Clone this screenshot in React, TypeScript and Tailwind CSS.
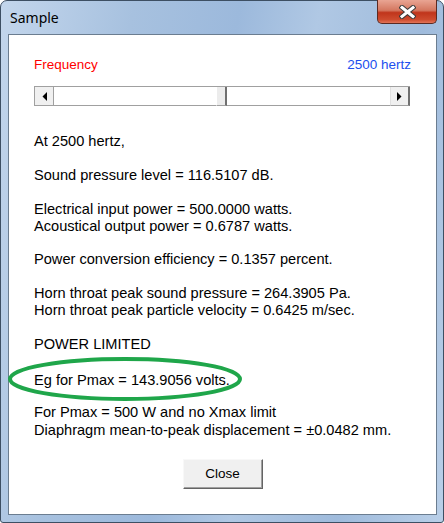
import React from "react";

const Arrow = ({ dir }: { dir: "l" | "r" }) => (
  <svg width="5" height="9" viewBox="0 0 5 9">
    {dir === "l" ? <polygon points="5,0 5,9 0.5,4.5" fill="#000" /> : <polygon points="0,0 0,9 4.5,4.5" fill="#000" />}
  </svg>
);

export default function App() {
  const body = { fontFamily: '"Liberation Sans", Arial, sans-serif' };
  return (
    <div className="w-[444px] h-[523px] relative overflow-hidden">
      <div className="w-[444px] h-[523px] rounded-t-[7px] rounded-b-[3px] border border-[#3d4f63] bg-[linear-gradient(100deg,#c3d6ec_0%,#a7c1df_25%,#9cb9dc_45%,#b0c8e4_60%,#9fbbdc_80%,#b9cfe8_100%)] flex flex-col">
        <div className="h-[33px] shrink-0 flex items-start pl-[9px] pt-[7px]">
          <span className="text-[14px] text-black leading-[20px]" style={{ fontFamily: '"Noto Sans", sans-serif' }}>Sample</span>
        </div>
        <div className="mx-[7px] mr-[6px] h-[481px] border border-[#6b7d90] bg-white flex flex-col px-[25px] pt-[21px] text-[14.6px] text-black" style={body}>
          <div className="flex justify-between leading-[17px] text-[13.5px]">
            <span className="text-[#ff0000]">Frequency</span>
            <span className="text-[#2050ee]">2500 hertz</span>
          </div>
          <div className="mt-[13px] h-[20px] w-[376px] flex border-t border-t-[#a0a0a0] bg-white">
            <div className="w-[20px] h-full bg-[#f0f0f0] border-r border-b border-r-[#a0a0a0] border-b-[#a0a0a0] border-l border-l-[#a0a0a0] flex items-center justify-center">
              <Arrow dir="l" />
            </div>
            <div className="w-[162px] h-full bg-white border-b border-b-[#a0a0a0]" />
            <div className="w-[11px] h-full bg-[#ececec] border-l border-l-[#ffffff] border-r-2 border-r-[#707070] border-b border-b-[#a0a0a0]" />
            <div className="flex-1 h-full bg-white border-b border-b-[#a0a0a0]" />
            <div className="w-[20px] h-full bg-[#f0f0f0] border-r-2 border-b border-r-[#707070] border-b-[#a0a0a0] border-l border-l-[#e0e0e0] flex items-center justify-center">
              <Arrow dir="r" />
            </div>
          </div>
          <div className="mt-[27px] leading-[17px] flex flex-col">
            <div>At 2500 hertz,</div>
            <div className="mt-[17px]">Sound pressure level = 116.5107 dB.</div>
            <div className="mt-[17px]">Electrical input power = 500.0000 watts.</div>
            <div>Acoustical output power = 0.6787 watts.</div>
            <div className="mt-[16px]">Power conversion efficiency = 0.1357 percent.</div>
            <div className="mt-[17px]">Horn throat peak sound pressure = 264.3905 Pa.</div>
            <div>Horn throat peak particle velocity = 0.6425 m/sec.</div>
            <div className="mt-[17px]">POWER LIMITED</div>
            <div className="mt-[19px]">Eg for Pmax = 143.9056 volts.</div>
            <div className="mt-[15px]">For Pmax = 500 W and no Xmax limit</div>
            <div className="mt-[1px]">Diaphragm mean-to-peak displacement = ±0.0482 mm.</div>
          </div>
          <div className="mt-[20px] flex justify-center">
            <button className="w-[80px] h-[30px] bg-[#f0f0f0] border border-t-[#f8f8f8] border-l-[#f8f8f8] border-r-[#646464] border-b-[#646464] shadow-[inset_-1px_-1px_0_#a0a0a0] text-[13.5px] text-black" style={body}>
              Close
            </button>
          </div>
        </div>
      </div>
      <div className="absolute left-[377px] top-0 w-[60px] h-[24px] rounded-b-[5px] border border-t-0 border-[#5b2a22] bg-[linear-gradient(180deg,#e9a593_0%,#d47760_45%,#c0351c_55%,#cd4b2e_85%,#e27458_100%)] flex items-center justify-center">
        <svg width="17" height="14" viewBox="0 0 17 14">
          <path d="M3 2.5 L14 11.5 M14 2.5 L3 11.5" stroke="#3b3b3b" strokeWidth="5" strokeLinecap="square" />
          <path d="M3 2.5 L14 11.5 M14 2.5 L3 11.5" stroke="#ffffff" strokeWidth="3" strokeLinecap="square" />
        </svg>
      </div>
      <svg className="absolute left-0 top-0 pointer-events-none" width="444" height="523">
        <ellipse cx="125" cy="379" rx="115" ry="20" fill="none" stroke="#1fa64a" strokeWidth="4" />
      </svg>
    </div>
  );
}
